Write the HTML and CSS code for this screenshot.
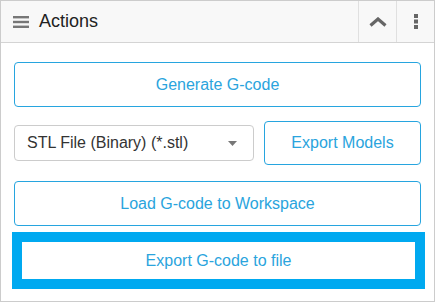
FILE: index.html
```html
<!DOCTYPE html>
<html>
<head>
	<title>Actions</title>
	<meta name="viewport" content="width=device-width, initial-scale=1.0">
	<link rel="stylesheet" href="styles.css">
</head>
<body>

	<div class="panel">
		<div class="head">
			<div class="title">
				<svg class="burger" width="16" height="12" viewBox="0 0 16 12">
					<rect x="0" y="0" width="16" height="2.4" fill="#777"/>
					<rect x="0" y="4.8" width="16" height="2.4" fill="#777"/>
					<rect x="0" y="9.6" width="16" height="2.4" fill="#777"/>
				</svg>
				<span>Actions</span>
			</div>
			<div class="tool">
				<svg width="18" height="10" viewBox="0 0 18 10">
					<path d="M1.5 8.5 L9 2 L16.5 8.5" fill="none" stroke="#666" stroke-width="3.2"/>
				</svg>
			</div>
			<div class="tool">
				<svg width="6" height="15" viewBox="0 0 6 15">
					<rect x="1" y="0" width="4" height="4" fill="#666"/>
					<rect x="1" y="5.5" width="4" height="4" fill="#666"/>
					<rect x="1" y="11" width="4" height="4" fill="#666"/>
				</svg>
			</div>
		</div>

		<div class="body">
			<button class="btn gen">Generate G-code</button>
			<div class="row">
				<div class="select">
					<span>STL File (Binary) (*.stl)</span>
					<svg width="9" height="5" viewBox="0 0 9 5"><path d="M0 0 H9 L4.5 5 Z" fill="#777"/></svg>
				</div>
				<button class="btn models">Export Models</button>
			</div>
			<button class="btn load">Load G-code to Workspace</button>
			<button class="btn file">Export G-code to file</button>
		</div>
	</div>

</body>
</html>
```

FILE: styles.css
```css
*{
	box-sizing: border-box;
	font-family: "Liberation Sans", Arial, sans-serif;
}
body{
	margin: 0px;
	background: white;
}

.panel{
	width: 435px;
	height: 302px;
	border: 1px solid #cccccc;
	display: flex;
	flex-direction: column;
}

.head{
	height: 42px;
	background: #f8f8f8;
	border-bottom: 1px solid #d4d4d4;
	display: flex;
	align-items: stretch;
}

.head .title{
	flex: 1;
	display: flex;
	align-items: center;
	padding-left: 12px;
	color: #222;
	font-size: 18px;
}

.head .burger{
	margin-right: 10px;
}

.head .tool{
	width: 38px;
	border-left: 1px solid #e0e0e0;
	display: flex;
	justify-content: center;
	align-items: center;
}

.body{
	padding: 19px 13px 0px 13px;
	display: flex;
	flex-direction: column;
}

.btn{
	outline: none;
	background: white;
	border: 1px solid #27a5df;
	border-radius: 4px;
	color: #2aa4dd;
	font-size: 16px;
	height: 45px;
	width: 100%;
	cursor: pointer;
	padding: 0px;
}

.row{
	display: flex;
	align-items: center;
	gap: 10px;
	margin: 14px 0px 16px 0px;
}

.select{
	width: 240px;
	height: 36px;
	border: 1px solid #cccccc;
	border-radius: 4px;
	display: flex;
	justify-content: space-between;
	align-items: center;
	padding: 0px 16px 0px 12px;
	color: #333;
	font-size: 16px;
}

.btn.models{
	width: 157px;
	height: 44px;
}

.btn.file{
	margin: 6px -4px 0px -2px;
	width: 413px;
	height: 57px;
	border: 10px solid #00a9f0;
	border-radius: 0px;
}
```
